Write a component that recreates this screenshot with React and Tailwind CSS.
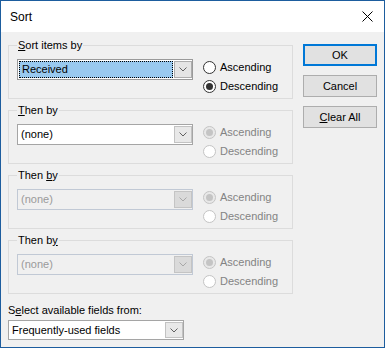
import React from 'react';

const FONT = { fontFamily: '"Liberation Sans", Arial, sans-serif' };

function Chevron({ color = '#606060' }) {
  return (
    <svg width="8" height="5" viewBox="0 0 8 5">
      <path d="M0.5 0.5 L4 4 L7.5 0.5" fill="none" stroke={color} strokeWidth="1" />
    </svg>
  );
}

function Combo({ value, variant = 'normal', className = '' }) {
  if (variant === 'focus') {
    return (
      <div className={`flex h-[21px] w-[176px] gap-[1px] border border-[#9a9a9a] bg-white p-[1px] pr-0 ${className}`}>
        <div className="flex flex-1 items-center border border-dotted border-black bg-[#99c9ef] pl-[2px] leading-none">
          {value}
        </div>
        <div className="flex w-[18px] items-center justify-center border border-[#adadad] bg-[#e5e5e5]">
          <Chevron />
        </div>
      </div>
    );
  }
  if (variant === 'disabled') {
    return (
      <div className={`flex h-[21px] w-[176px] border border-[#c1c9d5] bg-[#f0f0f0] pl-[3px] ${className}`}>
        <div className="flex flex-1 items-center leading-none text-[#9a9a9a]">{value}</div>
        <div className="my-[1px] flex w-[18px] items-center justify-center border border-[#c4c4c4] bg-[#dadada]">
          <Chevron color="#a8a8a8" />
        </div>
      </div>
    );
  }
  return (
    <div className={`flex h-[21px] w-[176px] border border-[#a5a5a5] bg-white pl-[3px] ${className}`}>
      <div className="flex flex-1 items-center leading-none">{value}</div>
      <div className="my-[1px] flex w-[18px] items-center justify-center border border-[#c2c2c2] bg-[#e8e8e8]">
        <Chevron />
      </div>
    </div>
  );
}

function Radio({ label, checked, disabled }) {
  return (
    <div className="flex h-[19px] items-center gap-[4px]">
      <span
        className={`flex h-[13px] w-[13px] items-center justify-center rounded-full border ${
          disabled
            ? checked
              ? 'border-[#c4c4c4] bg-[#e8e8e8]'
              : 'border-[#c4c4c4] bg-white'
            : 'border-[#333333] bg-white'
        }`}
      >
        {checked && (
          <span className={`h-[7px] w-[7px] rounded-full ${disabled ? 'bg-[#c4c4c4]' : 'bg-[#333333]'}`} />
        )}
      </span>
      <span className={disabled ? 'text-[#838383]' : 'text-black'}>{label}</span>
    </div>
  );
}

function Group({ legend, combo, disabledRadios, descending }) {
  return (
    <fieldset className="w-[285px] border border-[#dcdcdc] pb-[2px] pl-[8px]">
      <legend className="px-[1px] leading-[16px]">{legend}</legend>
      <div className="flex items-start">
        <div className="mt-[6px]">{combo}</div>
        <div className="ml-[10px] mt-[5px] flex flex-col">
          <Radio label="Ascending" checked={!descending} disabled={disabledRadios} />
          <Radio label="Descending" checked={descending} disabled={disabledRadios} />
        </div>
      </div>
    </fieldset>
  );
}

function Button({ children, primary }) {
  return (
    <div
      className={`flex h-[22px] w-[74px] items-center justify-center bg-[#e1e1e1] ${
        primary ? 'border-2 border-[#0078d7]' : 'border border-[#adadad]'
      }`}
    >
      {children}
    </div>
  );
}

export default function App() {
  return (
    <div
      className="flex h-[348px] w-[385px] flex-col border border-[#1d5d9e] bg-[#f0f0f0] text-[11px] text-black"
      style={FONT}
    >
      {/* title bar */}
      <div className="flex h-[31px] items-center justify-between bg-white pl-[9px] pr-[11px]">
        <span className="text-[12px]">Sort</span>
        <svg width="11" height="11" viewBox="0 0 11 11">
          <path d="M0.5 0.5 L10.5 10.5 M10.5 0.5 L0.5 10.5" stroke="#000" strokeWidth="1" />
        </svg>
      </div>

      <div className="flex flex-1 gap-[10px] pl-[7px] pt-[5px]">
        <div className="flex flex-col">
          <div className="flex flex-col gap-[3px]">
            <Group
              legend={<><span className="underline">S</span>ort items by</>}
              combo={<Combo value="Received" variant="focus" />}
              descending
            />
            <Group
              legend={<><span className="underline">T</span>hen by</>}
              combo={<Combo value="(none)" />}
              disabledRadios
            />
            <Group
              legend={<>Then <span className="underline">b</span>y</>}
              combo={<Combo value="(none)" variant="disabled" />}
              disabledRadios
            />
            <Group
              legend={<>Then b<span className="underline">y</span></>}
              combo={<Combo value="(none)" variant="disabled" />}
              disabledRadios
            />
          </div>
          <div className="mt-[8px] leading-[16px]">
            S<span className="underline">e</span>lect available fields from:
          </div>
          <Combo value="Frequently-used fields" className="mt-[2px] !h-[20px]" />
        </div>

        <div className="flex flex-col gap-[9px] pt-[7px]">
          <Button primary>OK</Button>
          <Button>Cancel</Button>
          <Button>
            <span><span className="underline">C</span>lear All</span>
          </Button>
        </div>
      </div>
    </div>
  );
}
